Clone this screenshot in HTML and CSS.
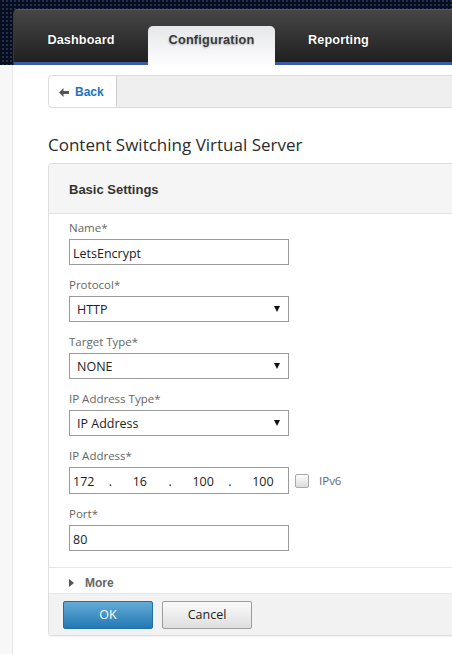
FILE: index.html
```html
<!DOCTYPE html>
<html>
<head>
<meta charset="utf-8">
<link rel="stylesheet" href="styles.css">
</head>
<body>
<div class="topbar">
  <nav class="nav">
    <div class="tab tab-dash">Dashboard</div>
    <div class="tab tab-active">Configuration</div>
    <div class="tab tab-rep">Reporting</div>
  </nav>
</div>
<div class="page">
  <div class="strip"></div>
  <div class="content">
    <div class="backbar">
      <div class="backbtn">
        <svg class="backicon" width="10" height="9" viewBox="0 0 10 9"><path d="M0 4.5 L4.5 0 L4.5 3 L10 3 L10 6 L4.5 6 L4.5 9 Z" fill="#555"/></svg>
        <span class="backtext">Back</span>
      </div>
    </div>
    <h1 class="title">Content Switching Virtual Server</h1>
    <div class="panel">
      <div class="panel-head">Basic Settings</div>
      <div class="panel-body">
        <div class="field">
          <div class="label">Name*</div>
          <div class="input">LetsEncrypt</div>
        </div>
        <div class="field">
          <div class="label">Protocol*</div>
          <div class="select"><span>HTTP</span><span class="arrow"></span></div>
        </div>
        <div class="field">
          <div class="label">Target Type*</div>
          <div class="select"><span>NONE</span><span class="arrow"></span></div>
        </div>
        <div class="field">
          <div class="label">IP Address Type*</div>
          <div class="select"><span>IP Address</span><span class="arrow"></span></div>
        </div>
        <div class="field">
          <div class="label">IP Address*</div>
          <div class="iprow">
            <div class="input ip">
              <span class="octet">172</span><span class="dot">.</span>
              <span class="octet">16</span><span class="dot">.</span>
              <span class="octet">100</span><span class="dot">.</span>
              <span class="octet">100</span>
            </div>
            <span class="checkbox"></span>
            <span class="cblabel">IPv6</span>
          </div>
        </div>
        <div class="field">
          <div class="label">Port*</div>
          <div class="input">80</div>
        </div>
      </div>
      <div class="more"><span class="tri"></span><span class="moretext">More</span></div>
      <div class="footer">
        <div class="btn btn-ok">OK</div>
        <div class="btn btn-cancel">Cancel</div>
      </div>
    </div>
  </div>
</div>
</body>
</html>
```
FILE: styles.css
```css
html, body {
  margin: 0;
  padding: 0;
  overflow: hidden;
  background: #fff;
  width: 452px;
  height: 654px;
}
body {
  font-family: "Open Sans", "Liberation Sans", sans-serif;
  color: #333;
}
.topbar {
  height: 65px;
  padding-top: 9px;
  box-sizing: border-box;
  background-color: #0a0e1a;
  background-image: linear-gradient(90deg, #0a0e1a 2px, transparent 2px), linear-gradient(#1f305c 2px, transparent 2px);
  background-size: 4px 4px;
}
.nav {
  margin-left: 13px;
  height: 56px;
  box-sizing: border-box;
  width: 700px;
  border-radius: 5px 0 0 0;
  border-top: 1px solid #5c5c5c;
  border-left: 1px solid #3a3a3a;
  background: linear-gradient(#464646, #1e1e1e);
  box-shadow: inset 0 -3px 0 #3c5aa8;
  display: flex;
  align-items: flex-end;
}
.tab {
  font-family: "Liberation Sans", Arial, sans-serif;
  font-weight: bold;
  font-size: 12.7px;
  height: 39px;
  box-sizing: border-box;
  padding-top: 7px;
  text-align: center;
  color: #fff;
  text-shadow: 0 0 1px #000;
  letter-spacing: 0.1px;
}
.tab-dash { width: 134px; }
.tab-active {
  width: 127px;
  color: #3a3a3a;
  border-radius: 5px 5px 0 0;
  background: linear-gradient(#e6e7ea, #fdfdfd);
  text-shadow: 0 1px 2px rgba(0,0,0,0.25);
  letter-spacing: 0.2px;
}
.tab-rep { width: 127px; }

.page {
  display: flex;
  height: 589px;
}
.strip {
  width: 12px;
  flex-shrink: 0;
  background: #f7f7f7;
  border-right: 1px solid #e6e6e6;
}
.content {
  width: 500px;
  flex-shrink: 0;
  padding-left: 35px;
  padding-top: 10px;
}
.backbar {
  height: 33px;
  box-sizing: border-box;
  border: 1px solid #dcdcdc;
  border-radius: 4px;
  background: #efefef;
  display: flex;
}
.backbtn {
  width: 68px;
  box-sizing: border-box;
  background: #fff;
  border-right: 1px solid #cfcfcf;
  border-radius: 4px 0 0 4px;
  display: flex;
  align-items: center;
  padding-left: 10px;
  padding-top: 1px;
}
.backicon { margin-right: 6px; }
.backtext {
  font-family: "Liberation Sans", Arial, sans-serif;
  font-weight: bold;
  font-size: 12px;
  color: #1a72c4;
}
.title {
  margin: 0;
  padding-top: 25px;
  height: 55px;
  box-sizing: border-box;
  font-weight: normal;
  font-size: 17px;
  line-height: 24px;
  color: #2c2c2c;
}
.panel {
  border: 1px solid #dedede;
  border-radius: 4px 0 0 4px;
  box-shadow: 0 1px 1px rgba(0,0,0,0.06);
  background: #fff;
}
.panel-head {
  height: 50px;
  box-sizing: border-box;
  background: #f5f5f5;
  border-bottom: 1px solid #e2e2e2;
  border-radius: 4px 0 0 0;
  padding-left: 20px;
  padding-top: 1px;
  line-height: 49px;
  font-family: "Liberation Sans", Arial, sans-serif;
  font-weight: bold;
  font-size: 13px;
  color: #333;
}
.panel-body {
  padding: 5px 0 5px 20px;
  border-bottom: 1px solid #e6e6e6;
}
.field { margin-bottom: 11px; }
.label {
  font-size: 11.5px;
  line-height: 17px;
  color: #666;
  margin-bottom: 3px;
}
.input, .select {
  width: 220px;
  height: 26px;
  box-sizing: border-box;
  border: 1px solid #9a9a9a;
  background: #fff;
  font-size: 12.5px;
  line-height: 24px;
  color: #222;
}
.input { padding-left: 3px; padding-top: 2px; }
.select {
  padding-left: 7px;
  padding-right: 8px;
  padding-top: 2px;
  display: flex;
  justify-content: space-between;
  align-items: center;
}
.arrow {
  width: 0;
  height: 0;
  border-left: 3px solid transparent;
  border-right: 3px solid transparent;
  border-top: 6px solid #111;
  margin-top: -2px;
}
.iprow {
  display: flex;
  align-items: center;
}
.input.ip {
  display: flex;
  height: 27px;
  padding-left: 3px;
  padding-top: 2px;
}
.octet { width: 36px; }
.dot { width: 24px; }
.checkbox {
  width: 14px;
  height: 14px;
  box-sizing: border-box;
  border: 1px solid #a8a8a8;
  border-radius: 2px;
  background: linear-gradient(#fcfcfc, #dcdcdc);
  margin-left: 6px;
  margin-right: 10px;
}
.cblabel {
  font-size: 11.5px;
  color: #666;
}
.more {
  height: 26px;
  box-sizing: border-box;
  border-bottom: 1px solid #e6e6e6;
  display: flex;
  align-items: center;
  padding-left: 20px;
  padding-top: 5px;
}
.tri {
  width: 0;
  height: 0;
  border-top: 4.5px solid transparent;
  border-bottom: 4.5px solid transparent;
  border-left: 5px solid #555;
  margin-right: 11px;
}
.moretext {
  font-family: "Liberation Sans", Arial, sans-serif;
  font-weight: bold;
  font-size: 12px;
  color: #666;
}
.footer {
  background: #f2f2f2;
  padding: 7px 0 6px 14px;
  display: flex;
  gap: 9px;
  border-radius: 0 0 0 4px;
}
.btn {
  width: 90px;
  height: 28px;
  box-sizing: border-box;
  border-radius: 2px;
  text-align: center;
  line-height: 26px;
  font-size: 12.5px;
}
.btn-ok {
  background: linear-gradient(#64acd8, #2479b3);
  border: 1px solid #1f6ea6;
  color: #fff;
}
.btn-cancel {
  background: linear-gradient(#fbfbfb, #dedede);
  border: 1px solid #9c9c9c;
  color: #222;
}
```
